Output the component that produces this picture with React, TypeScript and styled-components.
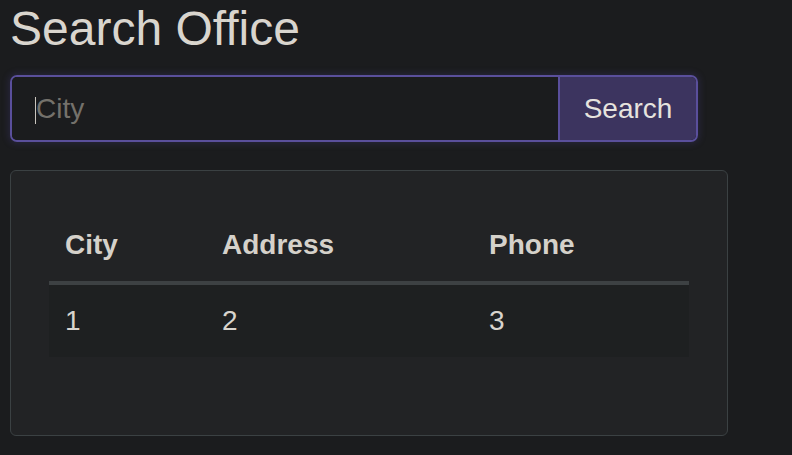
import React from "react";
import styled, { createGlobalStyle } from "styled-components";

const Global = createGlobalStyle`
  html, body {
    margin: 0;
    padding: 0;
    background: #1b1c1e;
    color: #d8d4cd;
    font-family: "Liberation Sans", Arial, sans-serif;
  }
  * { box-sizing: border-box; }
`;

const Page = styled.div`
  padding: 2px 10px 0;
  width: 738px;
`;

const Title = styled.h1`
  margin: 0;
  font-size: 48px;
  font-weight: 400;
  line-height: 53px;
  color: #d9d5ce;
`;

const SearchGroup = styled.form`
  margin-top: 20px;
  width: 688px;
  height: 67px;
  display: flex;
  border: 2px solid #5a4f9c;
  border-radius: 7px;
  box-shadow: 0 0 6px 2px rgba(70, 60, 130, 0.28);
  overflow: hidden;
`;

const InputWrap = styled.div`
  position: relative;
  flex: 1;
  display: flex;
  border-right: 2px solid #5a4f9c;
`;

const CityInput = styled.input`
  flex: 1;
  border: none;
  outline: none;
  background: #1b1c1e;
  color: #d8d4cd;
  font-family: inherit;
  font-size: 28px;
  padding: 0 0 0 24px;
  caret-color: transparent;
  &::placeholder {
    color: #74716b;
  }
`;

const Caret = styled.span`
  position: absolute;
  left: 23px;
  top: 20px;
  width: 1px;
  height: 27px;
  background: #c9c5be;
`;

const SearchButton = styled.button`
  width: 136px;
  border: none;
  background: #3c345f;
  color: #e6e3de;
  font-family: inherit;
  font-size: 28px;
  padding: 0;
  cursor: pointer;
`;

const Card = styled.div`
  margin-top: 28px;
  width: 718px;
  height: 266px;
  border: 1px solid #3b4143;
  border-radius: 6px;
  background: #222325;
  padding: 38px;
`;

const Table = styled.table`
  width: 640px;
  border-collapse: collapse;
  table-layout: fixed;
  font-size: 28px;
`;

const HeadCell = styled.th<{ $w: number }>`
  width: ${(p) => p.$w}px;
  height: 74px;
  padding: 0 16px;
  text-align: left;
  font-weight: 700;
  color: #d5d1ca;
  border-bottom: 4px solid #3d4143;
`;

const BodyRow = styled.tr`
  background: #1e2021;
`;

const Cell = styled.td`
  height: 74px;
  padding: 0 16px;
  color: #d8d4cd;
`;

const columns = [
  { label: "City", w: 157 },
  { label: "Address", w: 267 },
  { label: "Phone", w: 216 },
];

export default function App() {
  return (
    <>
      <Global />
      <Page>
        <Title>Search Office</Title>
        <SearchGroup onSubmit={(e) => e.preventDefault()}>
          <InputWrap>
            <CityInput placeholder="City" />
            <Caret />
          </InputWrap>
          <SearchButton type="submit">Search</SearchButton>
        </SearchGroup>
        <Card>
          <Table>
            <thead>
              <tr>
                {columns.map((c) => (
                  <HeadCell key={c.label} $w={c.w}>
                    {c.label}
                  </HeadCell>
                ))}
              </tr>
            </thead>
            <tbody>
              <BodyRow>
                <Cell>1</Cell>
                <Cell>2</Cell>
                <Cell>3</Cell>
              </BodyRow>
            </tbody>
          </Table>
        </Card>
      </Page>
    </>
  );
}
